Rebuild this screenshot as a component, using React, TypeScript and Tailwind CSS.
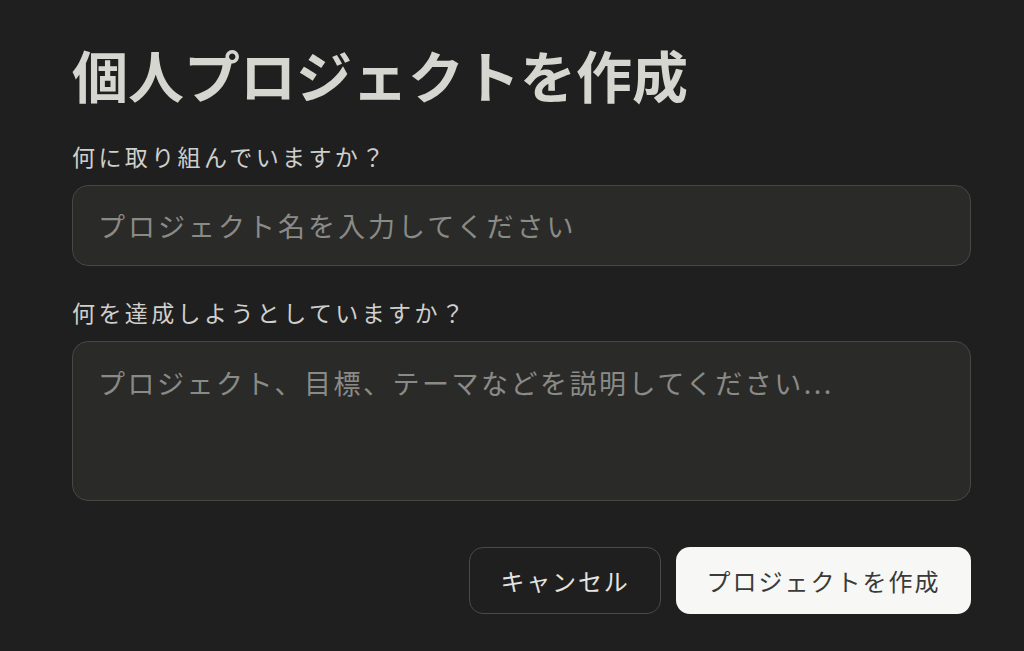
import React from "react";

export default function App() {
  return (
    <div
      className="w-[1024px] h-[651px] bg-[#1f1f1f] overflow-hidden"
      style={{ fontFamily: '"Noto Sans CJK JP", "Noto Sans", sans-serif' }}
    >
      <div className="pl-[72px] pr-[53px] pt-[36px] flex flex-col">
        <h1 className="text-[56px] leading-[76px] font-semibold text-[#d6d6d0]">
          個人プロジェクトを作成
        </h1>
        <label className="mt-[28px] text-[23px] leading-[32px] text-[#cfcfcc] tracking-[3.4px]">
          何に取り組んでいますか？
        </label>
        <input
          className="mt-[13px] h-[81px] w-full rounded-[16px] border border-[#474745] bg-[#2a2a29] px-[25px] text-[27px] tracking-[3px] text-[#d0d0ce] placeholder:text-[#8a8a87] outline-none"
          placeholder="プロジェクト名を入力してください"
        />
        <label className="mt-[30px] text-[23px] leading-[32px] text-[#cfcfcc] tracking-[3.4px]">
          何を達成しようとしていますか？
        </label>
        <textarea
          className="mt-[13px] h-[160px] w-full resize-none rounded-[16px] border border-[#474745] bg-[#2a2a29] px-[25px] pt-[23px] text-[27px] leading-[36px] tracking-[2.5px] text-[#d0d0ce] placeholder:text-[#8a8a87] outline-none"
          placeholder="プロジェクト、目標、テーマなどを説明してください..."
        />
        <div className="mt-[46px] flex justify-end gap-[15px]">
          <button className="h-[67px] w-[192px] rounded-[14px] border border-[#4a4a48] bg-transparent text-[24px] tracking-[1.8px] text-[#e4e4e2]">
            キャンセル
          </button>
          <button className="h-[67px] w-[295px] rounded-[14px] bg-[#f7f7f5] text-[24px] tracking-[2px] text-[#3a3a38]">
            プロジェクトを作成
          </button>
        </div>
      </div>
    </div>
  );
}
